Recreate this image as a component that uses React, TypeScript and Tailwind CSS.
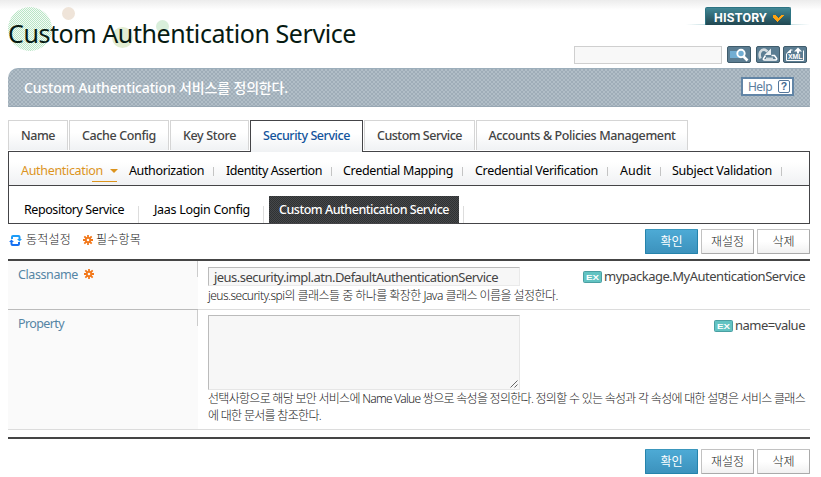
import { useLayoutEffect, useRef, useState } from "react";
import type { ReactNode } from "react";

/** Single line of text whose tracking is adjusted so that it fills `w` pixels. */
function Label({ w, children, className = "" }: { w: number; children: string; className?: string }) {
  const ref = useRef<HTMLSpanElement>(null);
  const [spacing, setSpacing] = useState(0);
  useLayoutEffect(() => {
    if (!ref.current) return;
    const natural = ref.current.getBoundingClientRect().width - spacing * children.length;
    setSpacing((w - natural) / children.length);
  }, [w, children]);
  return (
    <span ref={ref} className={`inline-block shrink-0 whitespace-pre ${className}`} style={{ letterSpacing: `${spacing}px` }}>
      {children}
    </span>
  );
}

function RequiredIcon() {
  return (
    <svg width="10" height="10" viewBox="0 0 10 10" className="shrink-0">
      <g stroke="#f2791c" strokeWidth="1.8">
        <path d="M5 0v3M5 7v3M0 5h3M7 5h3M1.300 1.300l2.200 2.200M6.500 6.500l2.200 2.200M8.700 1.300L6.500 3.500M3.500 6.500L1.300 8.700" />
        <circle cx="5" cy="5" r="2.200" fill="none" />
      </g>
    </svg>
  );
}

function DynamicIcon() {
  return (
    <svg width="13" height="11" viewBox="0 0 13 11" className="shrink-0">
      <path fill="#1c9cf7" d="M2 4V2q0-2 2-2h5.500q2 0 2 2v2H13l-2.500 2.500L8 4h1.500V2H4v2z" />
      <path fill="#1670f2" d="M11 7v2q0 2-2 2H3.500q-2 0-2-2V7H0l2.500-2.500L5 7H3.500v2H9V7z" />
    </svg>
  );
}

function Tab({ label, w, width, active = false }: { label: string; w: number; width: string; active?: boolean }) {
  return (
    <div
      className={`flex shrink-0 justify-center border border-b-0 bg-linear-to-b from-white from-40% to-[#f0f2f4] pt-[4px] leading-[22px] font-medium ${width} ${
        active ? "relative z-10 h-8 border-[#444447] text-[#13549c]" : "h-[30px] border-[#d5d5d5] text-[#444]"
      }`}
    >
      <Label w={w}>{label}</Label>
    </div>
  );
}

function Separator() {
  return <i className="mt-px h-[9px] w-px shrink-0 bg-[#c4c4c4]" />;
}

function Button({ label, primary = false }: { label: string; primary?: boolean }) {
  return (
    <button
      className={`flex h-[25px] w-[53px] items-center justify-center rounded-[1px] border text-[12px] leading-[20px] ${
        primary
          ? "border-[#2583ab] border-t-[#3b97bd] bg-linear-to-b from-[#4daad5] to-[#3c92bd] text-white"
          : "border-[#aaa] border-t-[#c2c2c2] border-l-[#c2c2c2] bg-linear-to-b from-white from-50% to-[#f1f1f1] font-light text-[#222]"
      }`}
    >
      {label}
    </button>
  );
}

function Actions() {
  return (
    <div className="flex gap-[3px]">
      <Button label="확인" primary />
      <Button label="재설정" />
      <Button label="삭제" />
    </div>
  );
}

function Example({ label, w }: { label: string; w: number }) {
  return (
    <div className="flex shrink-0 items-start gap-[2px] text-[13px] leading-[18px] text-[#444]">
      <svg width="19" height="12" viewBox="0 0 19 12" className="mt-[4px]">
        <rect x=".5" y=".5" width="18" height="11" rx="1" fill="#62c3c2" stroke="#4a9fa2" />
        <text x="3" y="8.500" fill="#fff" fontSize="6.500" fontWeight="700" fontFamily="Liberation Sans" textLength="13" lengthAdjust="spacingAndGlyphs">
          EX
        </text>
      </svg>
      <Label w={w}>{label}</Label>
    </div>
  );
}

function ToolButton({ children, className = "" }: { children: ReactNode; className?: string }) {
  return (
    <button className={`h-[17px] w-6 rounded-[2px] border border-[#405c6c] bg-[#5b7d92] ${className}`}>
      <svg width="22" height="15" viewBox="0 0 22 15">
        {children}
      </svg>
    </button>
  );
}

function Header() {
  return (
    <header className="relative flex h-[68px] justify-between">
      <svg width="180" height="60" className="absolute top-0 left-0">
        <defs>
          <pattern id="dots" width="2" height="2" patternUnits="userSpaceOnUse">
            <path fill="#b9e5c5" d="M0 0h1v1H0zM1 1h1v1H1z" />
            <path fill="#f4fbf6" d="M1 0h1v1H1zM0 1h1v1H0z" />
          </pattern>
        </defs>
        <circle cx="22" cy="29" r="22" fill="url(#dots)" />
        <circle cx="60.5" cy="13.5" r="6.5" fill="#efe4d9" />
        <circle cx="114.5" cy="37.5" r="10.5" fill="#e3edd2" />
        <circle cx="154.5" cy="26.5" r="6.5" fill="#d9efdb" />
      </svg>
      <h1 className="relative pt-[16px] text-[25px] leading-[34px] text-[#061a12]">
        <Label w={348}>Custom Authentication Service</Label>
      </h1>
      <div className="flex flex-col items-end pt-[7px]">
        <div className="flex h-[18px] w-[124px] items-end bg-linear-to-r from-transparent via-[#4c9aa6] to-transparent bg-[length:100%_1px] bg-bottom bg-no-repeat pl-[19px]">
          <div className="flex h-[18px] w-[86px] items-center gap-[6px] rounded-t-[2px] border border-b-0 border-[#2d7483] bg-linear-to-b from-[#418896] to-[#214751] pt-[2px] pl-[8px] font-['Roboto'] text-[12.5px] leading-[18px] font-bold text-white">
            <Label w={53}>HISTORY</Label>
            <svg width="11" height="8" viewBox="0 0 11 8" shapeRendering="crispEdges">
              <path fill="#ffa310" d="M0 1h3v1h1v1h1v1h1v-1h1v-1h1v-1h3v1h-1v1h-1v1h-1v1h-1v1h-1v1h-1v1h-1v-1h-1v-1h-1v-1h-1v-1h-1v-1h-1v-1h-1z" />
            </svg>
          </div>
        </div>
        <div className="mt-[21px] flex pr-[3px]">
          <input className="h-[18px] w-[148px] border border-[#cfcfcf] bg-[#f8f8f8]" />
          <ToolButton className="ml-[5px]">
            <rect x="2" y="4" width="14" height="7" fill="#72aed3" />
            <circle cx="13" cy="6.5" r="3.700" fill="#72aed3" stroke="#fff" strokeWidth="1.900" />
            <path d="M15.5 9.5l4 4" stroke="#fff" strokeWidth="2.600" />
          </ToolButton>
          <ToolButton className="ml-[5px]">
            <path d="M3.500 11.500C1.200 6 4 2 8 2.800l2.500 1.700" fill="none" stroke="#d3dbdf" strokeWidth="2.600" />
            <path d="M14 1.500v6.500H7.500z" fill="#e8edef" />
            <path d="M8.500 8.500L6.500 11.500q-.5 1.500 1 1.500h11q1.800-.3 1-1.800l-2-2.700h-3" fill="none" stroke="#fff" strokeWidth="1.500" />
            <path d="M9 11.200h7" stroke="#fff" />
          </ToolButton>
          <ToolButton className="ml-[3px]">
            <path d="M2.500 13.500V7l4-4h2M2.500 13.500h17V3.500" fill="none" stroke="#fff" />
            <path d="M7 2v4H3z" fill="#fff" />
            <path d="M14 0.500l-4 4h3v2h2v-2h3z" fill="#fff" />
            <text x="4" y="12.200" fill="#fff" fontSize="7.500" fontWeight="700" fontFamily="Liberation Sans" textLength="14.500" lengthAdjust="spacingAndGlyphs">
              XML
            </text>
          </ToolButton>
        </div>
      </div>
    </header>
  );
}

const sections: [string, number, string][] = [
  ["Authorization", 75, "w-[97px]"],
  ["Identity Assertion", 96, "w-[117px]"],
  ["Credential Mapping", 110, "w-[132px]"],
  ["Credential Verification", 123, "w-[145px]"],
  ["Audit", 31, "w-[52px]"],
  ["Subject Validation", 100, "w-[122px]"],
];

export default function App() {
  return (
    <div className="h-[477px] w-[821px] overflow-hidden bg-white bg-linear-to-b from-[#ececec] to-white bg-[length:100%_10px] bg-no-repeat pr-[11px] pl-2 font-['Noto_Sans','Noto_Sans_CJK_KR',sans-serif] text-[12.5px]">
      <Header />

      <div className="flex h-[39px] justify-between rounded-tl-[10px] border border-x-transparent border-t-[#9caebb] border-b-[#98a7b3] bg-[#a9b6c0] bg-[repeating-conic-gradient(#9fadb8_0_25%,#b1bec7_0_50%)] bg-[length:4px_4px] pr-[15px] pl-[15px]">
        <p className="pt-[8px] text-[14px] leading-[22px] font-medium text-white">
          <Label w={264}>Custom Authentication 서비스를 정의한다.</Label>
        </p>
        <button className="mt-[8px] flex h-[19px] w-[53px] items-center gap-[6px] border-2 border-[#6285a6] bg-white pl-[5px] text-[12px] leading-[15px] text-[#5c7d9d]">
          <Label w={24}>Help</Label>
          <svg width="12" height="13" viewBox="0 0 12 13">
            <rect x=".5" y=".5" width="11" height="12" rx="1.500" fill="none" stroke="#54779b" />
            <text x="6" y="10.300" textAnchor="middle" fill="#446a92" fontSize="10.500" fontWeight="700" fontFamily="Liberation Sans">
              ?
            </text>
          </svg>
        </button>
      </div>

      <nav className="mt-[13px] flex h-[31px] gap-px">
        <Tab label="Name" w={34} width="w-[60px]" />
        <Tab label="Cache Config" w={74} width="w-[100px]" />
        <Tab label="Key Store" w={53} width="w-[79px]" />
        <Tab label="Security Service" w={87} width="w-[113px]" active />
        <Tab label="Custom Service" w={85} width="w-[111px]" />
        <Tab label="Accounts & Policies Management" w={187} width="w-[212px]" />
      </nav>

      <div className="border border-[#444447] text-black">
        <nav className="flex h-[33px] items-center bg-linear-to-b from-white from-30% to-[#f0f1f3] pt-[4px] pl-3 leading-[22px]">
          <div className="relative flex w-[108px] items-center gap-[7px] text-[#dc941e]">
            <Label w={82}>Authentication</Label>
            <svg width="8" height="4" viewBox="0 0 8 4">
              <path fill="currentColor" d="M0 0h8L4 4z" />
            </svg>
            <i className="absolute bottom-0 left-[71px] h-px w-[25px] bg-[#dc941e]" />
          </div>
          {sections.map(([label, w, width]) => (
            <div key={label} className={`flex items-center gap-[9px] ${width}`}>
              <Label w={w}>{label}</Label>
              <Separator />
            </div>
          ))}
        </nav>
        <nav className="flex h-[38px] items-end border-t border-[#444447] pl-[15px] leading-[26px]">
          <Label w={100}>Repository Service</Label>
          <i className="ml-[14px] h-[17px] w-px bg-[#ddd]" />
          <Label w={96} className="ml-[15px]">Jaas Login Config</Label>
          <i className="ml-[13px] h-[17px] w-px bg-[#ddd]" />
          <div className="ml-[5px] flex h-[27px] w-[190px] justify-center bg-[repeating-conic-gradient(#2f3133_0_25%,#46484a_0_50%)] bg-[length:2px_2px] pt-px font-medium text-white">
            <Label w={170}>Custom Authentication Service</Label>
          </div>
          <i className="ml-[4px] h-[17px] w-px bg-[#ddd]" />
        </nav>
      </div>

      <div className="flex h-[35px] justify-between pt-[5px]">
        <div className="flex items-start pl-px text-[12px] leading-[22px] font-light text-[#222]">
          <span className="mt-[6px] flex"><DynamicIcon /></span>
          <Label w={45} className="ml-[4px]">동적설정</Label>
          <span className="mt-[6px] ml-[12px] flex"><RequiredIcon /></span>
          <Label w={45} className="ml-[3px]">필수항목</Label>
        </div>
        <Actions />
      </div>

      <section className="border-y-2 border-[#454545] pb-[7px]">
        <div className="flex h-[49px] border-b border-[#dcdcdc]">
          <div className="-mb-px flex w-[190px] shrink-0 justify-between border-b border-[#bbb] bg-[#fafafa] pl-[10px] leading-[20px] text-[#5585a5]">
            <div className="flex items-start pt-[4px]">
              <Label w={60}>Classname</Label>
              <span className="mt-[4px] ml-[6px] flex"><RequiredIcon /></span>
            </div>
            <i className="h-[16px] w-px bg-[#ccc]" />
          </div>
          <div className="pt-[6px] pl-[10px]">
            <div className="flex h-[19px] w-[312px] border border-[#eaeaea] border-t-[#bbb] border-l-[#bbb] bg-[#f7f7f7] pl-[5px] text-[13px] leading-[19px] text-[#444]">
              <Label w={284}>jeus.security.impl.atn.DefaultAuthenticationService</Label>
            </div>
            <p className="text-[12px] leading-[19px] font-light text-[#222]">
              <Label w={350}>jeus.security.spi의 클래스들 중 하나를 확장한 Java 클래스 이름을 설정한다.</Label>
            </p>
          </div>
          <div className="mt-[6px] ml-auto pr-[5px]">
            <Example label="mypackage.MyAutenticationService" w={201} />
          </div>
        </div>
        <div className="flex h-[120px] border-b border-[#dcdcdc]">
          <div className="-mb-px flex w-[190px] shrink-0 justify-between border-b border-[#dcdcdc] bg-[#fafafa] pl-[10px] leading-[20px] text-[#5585a5]">
            <Label w={46} className="pt-[4px]">Property</Label>
            <i className="h-[16px] w-px bg-[#ccc]" />
          </div>
          <div className="w-[420px] pt-[5px] pl-[10px]">
            <div className="flex h-[75px] w-[312px] items-end justify-end border border-[#e6e6e6] border-t-[#bbb] border-l-[#bbb] bg-[#f7f7f7]">
              <svg width="9" height="9" viewBox="0 0 9 9" stroke="#666" fill="none">
                <path d="M0.500 7.500l7-7M4.500 7.500l3-3" />
              </svg>
            </div>
            <p className="flex flex-col items-start text-[12px] leading-[17px] font-light text-[#222]">
              <Label w={597}>선택사항으로 해당 보안 서비스에 Name Value 쌍으로 속성을 정의한다. 정의할 수 있는 속성과 각 속성에 대한 설명은 서비스 클래스</Label>
              <Label w={113}>에 대한 문서를 참조한다.</Label>
            </p>
          </div>
          <div className="mt-[6px] ml-auto pr-[5px]">
            <Example label="name=value" w={70} />
          </div>
        </div>
      </section>

      <div className="mt-[10px] flex justify-end">
        <Actions />
      </div>
    </div>
  );
}
